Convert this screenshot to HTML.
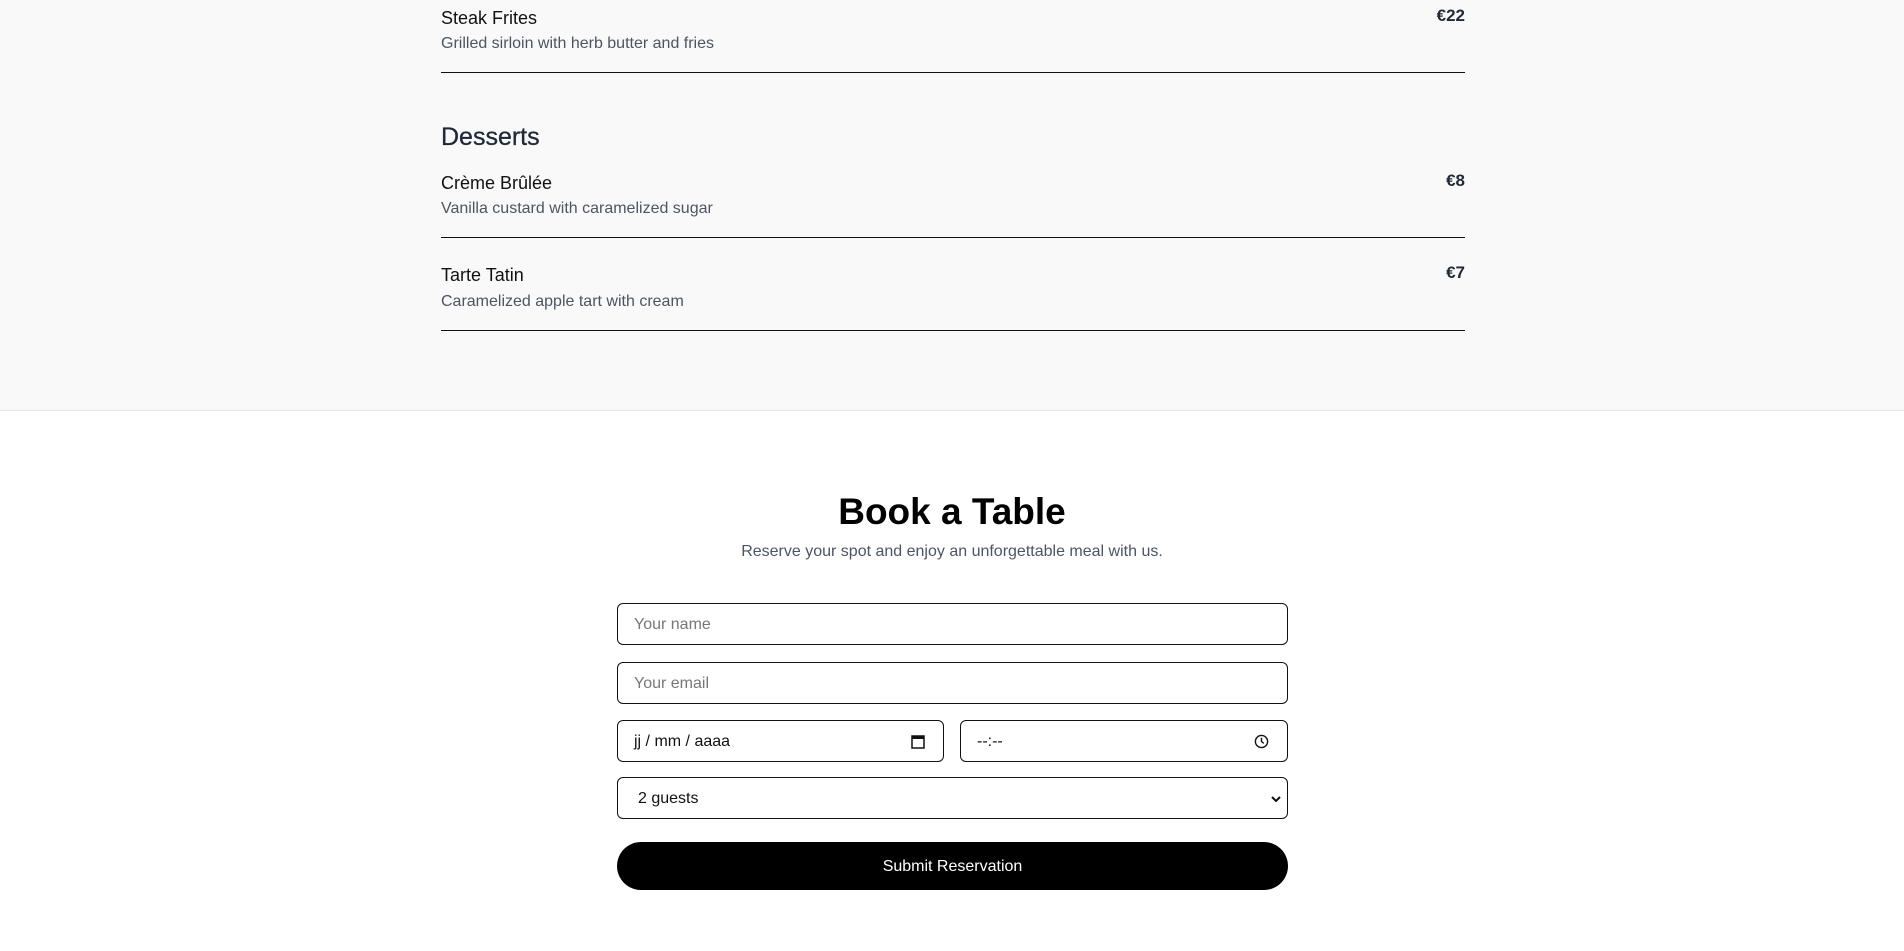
<!DOCTYPE html>
<html><head><meta charset="utf-8"><style>
*{box-sizing:border-box;margin:0;padding:0}
body{width:1904px;height:951px;overflow:hidden;font-family:"Liberation Sans",sans-serif;background:#fff;color:#111}
.menu{position:absolute;left:0;top:0;width:1904px;height:411px;background:#f9f9f9;border-bottom:1px solid #e5e5e5}
.item{position:absolute;left:441px;width:1024px;border-bottom:1.5px solid #111}
.t{position:absolute;left:0;font-size:18px;color:#111;line-height:20px}
.d{position:absolute;left:0;font-size:16px;color:#4b5563;line-height:20px}
.p{position:absolute;right:0;font-size:17px;font-weight:bold;color:#1f2937;line-height:20px}
h2{position:absolute;left:441px;top:122px;font-size:25px;font-weight:normal;color:#1f2937;line-height:30px;-webkit-text-stroke:0.3px #1f2937}
h1{position:absolute;left:0;width:1904px;text-align:center;top:488px;font-size:37px;font-weight:bold;line-height:48px;color:#000}
.sub{position:absolute;left:0;width:1904px;text-align:center;top:542px;font-size:16px;color:#4b5563;line-height:20px}
.in{position:absolute;border:1.3px solid #111;border-radius:6px;background:#fff;font-size:16px;line-height:20px;padding-left:16px;display:flex;align-items:center;padding-top:2px}
.ph{color:#777}
.btn{position:absolute;left:617px;top:842px;width:671px;height:48px;border-radius:24px;background:#000;color:#fff;font-size:16px;display:flex;align-items:center;justify-content:center;padding-top:2px}
</style></head><body>
<div class="menu">
<div class="item" style="top:0;height:73px"><div class="t" style="top:8px">Steak Frites</div><div class="d" style="top:34px">Grilled sirloin with herb butter and fries</div><div class="p" style="top:6px">€22</div></div>
<h2>Desserts</h2>
<div class="item" style="top:164px;height:74px"><div class="t" style="top:9px">Crème Brûlée</div><div class="d" style="top:35px">Vanilla custard with caramelized sugar</div><div class="p" style="top:7px">€8</div></div>
<div class="item" style="top:256px;height:75px"><div class="t" style="top:9px">Tarte Tatin</div><div class="d" style="top:36px">Caramelized apple tart with cream</div><div class="p" style="top:7px">€7</div></div>
</div>
<h1>Book a Table</h1>
<div class="sub">Reserve your spot and enjoy an unforgettable meal with us.</div>
<div class="in" style="left:617px;top:603px;width:671px;height:42px"><span class="ph">Your name</span></div>
<div class="in" style="left:617px;top:662px;width:671px;height:42px"><span class="ph">Your email</span></div>
<div class="in" style="left:617px;top:720px;width:327px;height:42px">jj / mm / aaaa
<svg style="position:absolute;right:18px;top:13px" width="14" height="15" viewBox="0 0 14 15"><rect x="1" y="2" width="12" height="12" fill="none" stroke="#111" stroke-width="1.5"/><rect x="1" y="2" width="12" height="3" fill="#111"/></svg></div>
<div class="in" style="left:960px;top:720px;width:328px;height:42px">--:--
<svg style="position:absolute;right:18px;top:13px" width="15" height="15" viewBox="0 0 16 16"><circle cx="8" cy="8" r="6.5" fill="none" stroke="#111" stroke-width="1.5"/><path d="M8 4v4l2.5 2" fill="none" stroke="#111" stroke-width="1.5"/></svg></div>
<div class="in" style="left:617px;top:777px;width:671px;height:42px;padding-left:20px">2 guests
<svg style="position:absolute;right:6px;top:17px" width="10" height="8" viewBox="0 0 10 8"><path d="M1 2l4 4 4-4" fill="none" stroke="#111" stroke-width="2"/></svg></div>
<div class="btn">Submit Reservation</div>
</body></html>
